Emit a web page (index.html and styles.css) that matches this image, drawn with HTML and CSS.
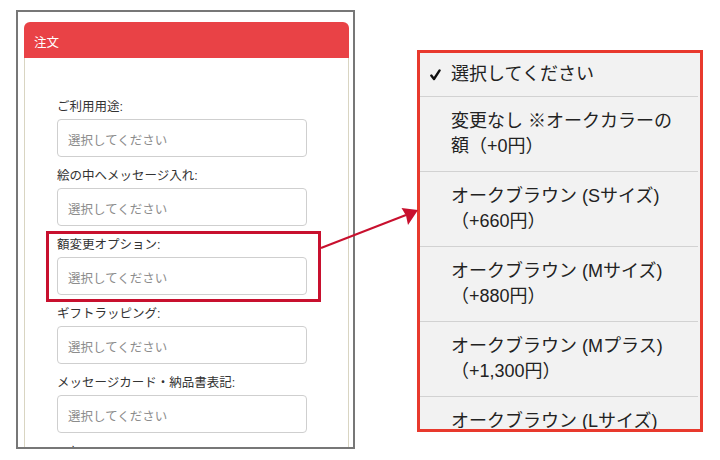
FILE: index.html
```html
<!DOCTYPE html>
<html lang="ja">
<head>
  <meta charset="UTF-8" />
  <meta name="viewport" content="width=device-width, initial-scale=1.0"/>
  <title>額変更オプション</title>
  <link rel="stylesheet" href="styles.css">
</head>
<body>
<div class="stage">

  <!-- 🔹 Order form (phone screenshot) -->
  <div class="phone">
    <div class="card">
      <div class="card-head">注文</div>
      <div class="card-body">
        <div class="field">
          <p class="field-label">ご利用用途:</p>
          <div class="select">選択してください</div>
        </div>
        <div class="field">
          <p class="field-label">絵の中へメッセージ入れ:</p>
          <div class="select">選択してください</div>
        </div>
        <div class="field highlight">
          <p class="field-label">額変更オプション:</p>
          <div class="select">選択してください</div>
        </div>
        <div class="field">
          <p class="field-label">ギフトラッピング:</p>
          <div class="select">選択してください</div>
        </div>
        <div class="field">
          <p class="field-label">メッセージカード・納品書表記:</p>
          <div class="select">選択してください</div>
        </div>
        <div class="field">
          <p class="field-label">のし:</p>
          <div class="select">選択してください</div>
        </div>
      </div>
    </div>
  </div>

  <!-- 🔹 Opened picker -->
  <ul class="picker">
    <li class="option checked">
      <span class="check">
        <svg width="11" height="12" viewBox="0 0 11 12"><path d="M1.3 6.6 L4 10 L9.6 1.4" fill="none" stroke="#111" stroke-width="2.4" stroke-linecap="round" stroke-linejoin="round"/></svg>
      </span>
      <span>選択してください</span>
    </li>
    <li class="option"><span class="check"></span><span>変更なし ※オークカラーの<br>額（+0円）</span></li>
    <li class="option"><span class="check"></span><span>オークブラウン (Sサイズ)<br>（+660円）</span></li>
    <li class="option"><span class="check"></span><span>オークブラウン (Mサイズ)<br>（+880円）</span></li>
    <li class="option"><span class="check"></span><span>オークブラウン (Mプラス)<br>（+1,300円）</span></li>
    <li class="option"><span class="check"></span><span>オークブラウン (Lサイズ)<br>（+1,540円）</span></li>
  </ul>

  <!-- arrow from the highlighted field to the picker -->
  <svg class="arrow" width="720" height="460" viewBox="0 0 720 460">
    <line x1="321" y1="248" x2="406" y2="215" stroke="#c8102e" stroke-width="2"/>
    <polygon points="418,210 401.5,208 406,215.5 408,225" fill="#c8102e"/>
  </svg>
</div>
</body>
</html>
```

FILE: styles.css
```css
body {
  margin: 0;
  background: #fff;
  font-family: "Liberation Sans", "Noto Sans CJK JP", sans-serif;
}
.stage {
  position: relative;
  display: flex;
  align-items: flex-start;
  padding: 10px 0 0 16px;
  width: 720px;
  height: 460px;
  box-sizing: border-box;
}
.phone {
  width: 339px;
  height: 439px;
  border: 2px solid #777;
  box-sizing: border-box;
  overflow: hidden;
  padding: 10px 4px 0 6px;
}
.card-head {
  height: 36px;
  box-sizing: border-box;
  padding: 13px 10px 0;
  line-height: 16px;
  font-size: 12.5px;
  color: #fff;
  background: #e94246;
  border-radius: 6px 6px 0 0;
}
.card-body {
  border-left: 1px solid #d9d5c2;
  border-right: 1px solid #d9d5c2;
  padding: 40px 0 0 32px;
  height: 400px;
}
.field {
  position: relative;
  width: 250px;
  margin-bottom: 10px;
}
.field-label {
  margin: 0 0 3px;
  font-size: 12.5px;
  line-height: 18px;
  color: #333;
  white-space: nowrap;
}
.select {
  width: 250px;
  height: 38px;
  box-sizing: border-box;
  border: 1px solid #cfcfcf;
  border-radius: 4px;
  padding: 11px 10px 0;
  font-size: 12.5px;
  line-height: 20px;
  color: #8c8c8c;
}
.highlight::after {
  content: "";
  position: absolute;
  top: -5px;
  right: -14px;
  bottom: -7px;
  left: -11px;
  border: 3px solid #c8102e;
}
.picker {
  list-style: none;
  margin: 40px 0 0 62px;
  padding: 0;
  width: 286px;
  height: 382px;
  box-sizing: border-box;
  border: 3px solid #e8392d;
  background: #f2f2f2;
  overflow: hidden;
}
.option {
  display: flex;
  align-items: flex-start;
  padding: 12px 0 12px 10px;
  margin-right: 2px;
  border-bottom: 1px solid #d2d2d2;
  font-size: 18px;
  line-height: 25px;
  color: #222;
}
.option.checked {
  padding-top: 9px;
  padding-bottom: 9px;
}
.check {
  flex: none;
  width: 21px;
  height: 25px;
  display: flex;
  align-items: center;
}
.arrow {
  position: absolute;
  top: 0;
  left: 0;
  pointer-events: none;
}
```
